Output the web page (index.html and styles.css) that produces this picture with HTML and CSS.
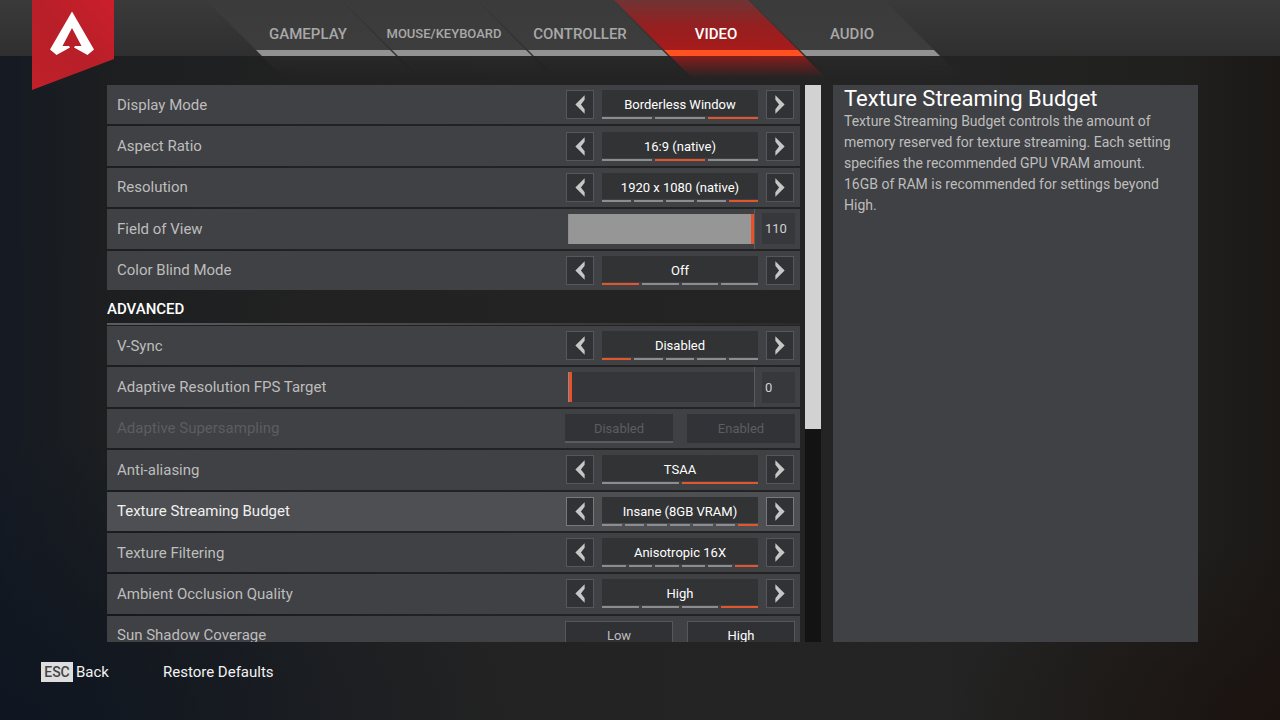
FILE: index.html
```
<!DOCTYPE html>
<html lang="en">
  <head>
    <meta charset="UTF-8">
    <meta name="viewport" content="width=device-width, initial-scale=1.0">
    <title>Settings - Video</title>
    <link rel="stylesheet" href="styles.css">
  </head>
  <body>
    <!-- arrow shapes shared by all the steppers -->
    <svg class="symbols" aria-hidden="true">
      <symbol id="prev" viewBox="0 0 28 28"><path d="M19 4v5l-4 5 4 5v5L9 14z"/></symbol>
      <symbol id="next" viewBox="0 0 28 28"><path d="M9 4v5l4 5-4 5v5l10-10z"/></symbol>
    </svg>

    <header class="topbar">
      <svg class="logo" viewBox="0 0 82 90" role="img" aria-label="Apex Legends">
        <defs>
          <linearGradient id="banner" x1="0" y1="1" x2="1" y2="0">
            <stop offset="0" stop-color="#c0202a"/>
            <stop offset="0.5" stop-color="#b81f28"/>
            <stop offset="1" stop-color="#cb1f2c"/>
          </linearGradient>
        </defs>
        <path fill="url(#banner)" d="M0 0h82v59L0 90z"/>
        <path fill="#fff" d="M40 11.500L18 49.500l6.500 5.500L38 47.500l-1-1.500h-6.500L40 28l9.500 18H43l-1 1.500L55.500 55l6.500-5.500z"/>
      </svg>
      <nav class="tabs">
        <a class="tab" href="#gameplay"><span>GAMEPLAY</span></a>
        <a class="tab tab-long" href="#mouse"><span>MOUSE/KEYBOARD</span></a>
        <a class="tab" href="#controller"><span>CONTROLLER</span></a>
        <a class="tab active" href="#video"><span>VIDEO</span></a>
        <a class="tab" href="#audio"><span>AUDIO</span></a>
      </nav>
    </header>

    <main class="content">
      <div class="list">
        <section class="group group-basic">
          <div class="row">
            <span class="label">Display Mode</span>
            <div class="stepper">
              <button class="arrow" aria-label="Previous display mode"><svg><use href="#prev"/></svg></button>
              <div class="choice"><span class="value">Borderless Window</span><div class="steps"><i></i><i></i><i class="on"></i></div></div>
              <button class="arrow" aria-label="Next display mode"><svg><use href="#next"/></svg></button>
            </div>
          </div>
          <div class="row">
            <span class="label">Aspect Ratio</span>
            <div class="stepper">
              <button class="arrow" aria-label="Previous aspect ratio"><svg><use href="#prev"/></svg></button>
              <div class="choice"><span class="value">16:9 (native)</span><div class="steps"><i></i><i class="on"></i><i></i></div></div>
              <button class="arrow" aria-label="Next aspect ratio"><svg><use href="#next"/></svg></button>
            </div>
          </div>
          <div class="row">
            <span class="label">Resolution</span>
            <div class="stepper">
              <button class="arrow" aria-label="Previous resolution"><svg><use href="#prev"/></svg></button>
              <div class="choice"><span class="value">1920 x 1080 (native)</span><div class="steps"><i></i><i></i><i></i><i></i><i class="on"></i></div></div>
              <button class="arrow" aria-label="Next resolution"><svg><use href="#next"/></svg></button>
            </div>
          </div>
          <div class="row">
            <label class="label" for="fov">Field of View</label>
            <div class="slider">
              <div class="track"><input id="fov" class="full" type="range" min="70" max="110" value="110"></div>
              <output class="number" for="fov">110</output>
            </div>
          </div>
          <div class="row">
            <span class="label">Color Blind Mode</span>
            <div class="stepper">
              <button class="arrow" aria-label="Previous color blind mode"><svg><use href="#prev"/></svg></button>
              <div class="choice"><span class="value">Off</span><div class="steps"><i class="on"></i><i></i><i></i><i></i></div></div>
              <button class="arrow" aria-label="Next color blind mode"><svg><use href="#next"/></svg></button>
            </div>
          </div>
        </section>

        <h2 class="heading">ADVANCED</h2>

        <section class="group group-advanced">
          <div class="row">
            <span class="label">V-Sync</span>
            <div class="stepper">
              <button class="arrow" aria-label="Previous v-sync"><svg><use href="#prev"/></svg></button>
              <div class="choice"><span class="value">Disabled</span><div class="steps"><i class="on"></i><i></i><i></i><i></i><i></i></div></div>
              <button class="arrow" aria-label="Next v-sync"><svg><use href="#next"/></svg></button>
            </div>
          </div>
          <div class="row">
            <label class="label" for="fps">Adaptive Resolution FPS Target</label>
            <div class="slider">
              <div class="track"><input id="fps" type="range" min="0" max="100" value="0"></div>
              <output class="number" for="fps">0</output>
            </div>
          </div>
          <div class="row disabled">
            <span class="label">Adaptive Supersampling</span>
            <div class="toggle">
              <label><input type="radio" name="supersampling" checked disabled><span>Disabled</span></label>
              <label><input type="radio" name="supersampling" disabled><span>Enabled</span></label>
            </div>
          </div>
          <div class="row">
            <span class="label">Anti-aliasing</span>
            <div class="stepper">
              <button class="arrow" aria-label="Previous anti-aliasing"><svg><use href="#prev"/></svg></button>
              <div class="choice"><span class="value">TSAA</span><div class="steps"><i></i><i class="on"></i></div></div>
              <button class="arrow" aria-label="Next anti-aliasing"><svg><use href="#next"/></svg></button>
            </div>
          </div>
          <div class="row selected">
            <span class="label">Texture Streaming Budget</span>
            <div class="stepper">
              <button class="arrow" aria-label="Previous texture budget"><svg><use href="#prev"/></svg></button>
              <div class="choice"><span class="value">Insane (8GB VRAM)</span><div class="steps"><i></i><i></i><i></i><i></i><i></i><i></i><i class="on"></i></div></div>
              <button class="arrow" aria-label="Next texture budget"><svg><use href="#next"/></svg></button>
            </div>
          </div>
          <div class="row">
            <span class="label">Texture Filtering</span>
            <div class="stepper">
              <button class="arrow" aria-label="Previous texture filtering"><svg><use href="#prev"/></svg></button>
              <div class="choice"><span class="value">Anisotropic 16X</span><div class="steps"><i></i><i></i><i></i><i></i><i></i><i class="on"></i></div></div>
              <button class="arrow" aria-label="Next texture filtering"><svg><use href="#next"/></svg></button>
            </div>
          </div>
          <div class="row">
            <span class="label">Ambient Occlusion Quality</span>
            <div class="stepper">
              <button class="arrow" aria-label="Previous occlusion quality"><svg><use href="#prev"/></svg></button>
              <div class="choice"><span class="value">High</span><div class="steps"><i></i><i></i><i></i><i class="on"></i></div></div>
              <button class="arrow" aria-label="Next occlusion quality"><svg><use href="#next"/></svg></button>
            </div>
          </div>
          <div class="row">
            <span class="label">Sun Shadow Coverage</span>
            <div class="toggle">
              <label><input type="radio" name="sunshadow"><span>Low</span></label>
              <label><input type="radio" name="sunshadow" checked><span>High</span></label>
            </div>
          </div>
        </section>
      </div>

      <div class="scrollbar"><div class="thumb"></div></div>

      <aside class="details">
        <h1>Texture Streaming Budget</h1>
        <p>Texture Streaming Budget controls the amount of memory reserved for texture streaming. Each setting specifies the recommended GPU VRAM amount. 16GB of RAM is recommended for settings beyond High.</p>
      </aside>
    </main>

    <footer class="footer">
      <button class="action"><kbd>ESC</kbd>Back</button>
      <button class="action">Restore Defaults</button>
    </footer>
  </body>
</html>
```

FILE: styles.css
```
* {
	box-sizing: border-box;
}
body {
	margin: 0;
	height: 100vh;
	display: flex;
	flex-direction: column;
	overflow: hidden;
	font-family: Roboto, "Liberation Sans", sans-serif;
	font-size: 15px;
	color: #bdbdbd;
	background:
		radial-gradient(ellipse at 0% 100%, #0f1621 0%, rgba(15, 22, 33, 0) 28%),
		radial-gradient(ellipse at 100% 100%, #1b1310 0%, rgba(27, 19, 16, 0) 18%),
		linear-gradient(90deg, #151a23 0%, #1c1e20 8%, #222222 25%, #242424 70%, #20201f 92%, #1b1816 100%);
}
button, input {
	font: inherit;
	color: inherit;
	margin: 0;
}
button {
	padding: 0;
	border: 0;
	background: none;
	cursor: pointer;
}
.symbols {
	position: absolute;
	width: 0;
	height: 0;
}

/* top bar */
.topbar {
	flex: none;
	height: 56px;
	padding-left: 32px;
	display: flex;
	align-items: flex-start;
	background: linear-gradient(#3a3a3a, #2f2f2f);
}
.logo {
	flex: none;
	width: 82px;
	height: 90px;
}
.tabs {
	display: flex;
	margin-left: 126px;
}
.tab {
	position: relative;
	width: 136px;
	height: 78px;
	padding-top: 22px;
	text-align: center;
	font-size: 15px;
	line-height: 24px;
	font-weight: 500;
	color: #a8a8a8;
	text-decoration: none;
}
.tab-long {
	font-size: 13px;
}
.tab span {
	position: relative;
}
/* slanted plate, the stripe is part of the gradient */
.tab::before {
	content: "";
	position: absolute;
	top: 0;
	bottom: 0;
	left: 0;
	right: 2px;
	transform: skewX(45deg);
	transform-origin: 50% 34px;
	background: linear-gradient(#3b3b3b 0, #3d3d3d 50px, #929292 50px, #929292 56px, #282828 56px, rgba(36, 36, 36, 0) 78px);
}
.tab.active {
	color: #fff;
}
.tab.active::before {
	background: linear-gradient(#703434 0, #951f20 26px, #a71b1b 50px, #ff5220 50px, #ff5220 56px, #861d1d 56px, rgba(70, 28, 28, 0) 78px);
}

/* settings list */
.content {
	flex: 1;
	min-height: 0;
	display: grid;
	grid-template-columns: minmax(0, 693fr) 21px minmax(0, 377fr);
	padding: 29px 82px 0 107px;
}
.list {
	overflow: hidden;
}
.group {
	display: grid;
	grid-auto-rows: 1fr;
	gap: 2px;
}
.group-basic {
	min-height: 205px;
}
.group-advanced {
	min-height: 329px;
}
.row {
	display: flex;
	align-items: center;
	justify-content: space-between;
	padding: 0 5px 0 10px;
	background: #404144;
}
.row.selected {
	background: #4e4f52;
	color: #f0f0f0;
}
.heading {
	margin: 0 0 1px;
	height: 35px;
	padding-top: 9px;
	font-size: 15px;
	line-height: 20px;
	font-weight: 500;
	color: #fff;
	border-bottom: 2px solid;
	border-image: linear-gradient(90deg, #5c5c60, #4a4a4d 40%, #2a2a2a) 1;
}

/* value stepper */
.stepper {
	width: 230px;
	padding: 0 1px;
	display: grid;
	grid-template-columns: 28px 1fr 28px;
	gap: 8px;
}
.arrow {
	height: 29px;
	border: 1px solid #55575a;
	background: #313235;
}
.selected .arrow {
	border-color: #77797b;
}
.arrow svg {
	display: block;
	width: 26px;
	height: 27px;
	fill: #c6c6c6;
}
.choice {
	display: flex;
	flex-direction: column;
	justify-content: space-between;
}
.value {
	height: 26px;
	line-height: 30px;
	font-size: 13px;
	text-align: center;
	color: #fff;
	background: #323335;
}
.steps {
	display: flex;
	gap: 3px;
}
.steps i {
	flex: 1;
	height: 2px;
	background: #8c8d8f;
}
.steps .on {
	background: #e2552d;
}

/* slider */
.slider {
	width: 230px;
	align-self: stretch;
	display: flex;
	align-items: center;
	padding-left: 3px;
}
.track {
	flex: 1;
	align-self: stretch;
	display: flex;
	align-items: center;
	border-right: 1px solid #5b5c5e;
	margin-right: 7px;
}
.track input {
	appearance: none;
	width: 100%;
	height: 30px;
	background: #353639;
	border-left: 1px solid #8c8c8c;
}
.track .full {
	background: #969696;
}
.track input::-webkit-slider-thumb {
	appearance: none;
	width: 3px;
	height: 30px;
	background: #ea5128;
}
.number {
	width: 33px;
	height: 31px;
	padding-left: 3px;
	font-size: 13px;
	line-height: 31px;
	color: #d0d0d0;
	background: #37383b;
}

/* two way toggle */
.toggle {
	width: 230px;
	display: grid;
	grid-template-columns: 1fr 1fr;
	gap: 14px;
}
.toggle input {
	position: absolute;
	opacity: 0;
}
.toggle span {
	display: block;
	height: 29px;
	line-height: 27px;
	font-size: 13px;
	text-align: center;
	border: 1px solid #55575a;
	background: #303134;
}
.toggle input:checked + span {
	color: #fff;
}
.disabled, .disabled .toggle input:checked + span {
	color: #5c5d60;
}
.disabled .toggle span {
	line-height: 29px;
	border: 0;
	border-bottom: 2px solid #323336;
	background: #323336;
}
.disabled .toggle input:checked + span {
	border-bottom-color: #5b5c5f;
}

.scrollbar {
	margin-left: 5px;
	background: #131313;
}
.thumb {
	height: 344px;
	background: #d2d2d2;
}

/* description */
.details {
	margin-left: 12px;
	padding: 2px 22px 2px 11px;
	background: #404144;
}
.details h1 {
	margin: 0;
	font-size: 22px;
	line-height: 24px;
	font-weight: 400;
	color: #fff;
}
.details p {
	margin: 0;
	font-size: 14px;
	line-height: 21px;
}

.footer {
	flex: none;
	height: 78px;
	padding: 20px 41px;
	display: flex;
	align-items: flex-start;
	gap: 54px;
	color: #f2f2f2;
}
.action {
	display: flex;
	align-items: center;
	line-height: 20px;
}
.action kbd {
	width: 32px;
	margin-right: 3px;
	font-family: inherit;
	font-size: 14px;
	font-weight: 500;
	text-align: center;
	color: #444;
	background: #dedede;
}
```
